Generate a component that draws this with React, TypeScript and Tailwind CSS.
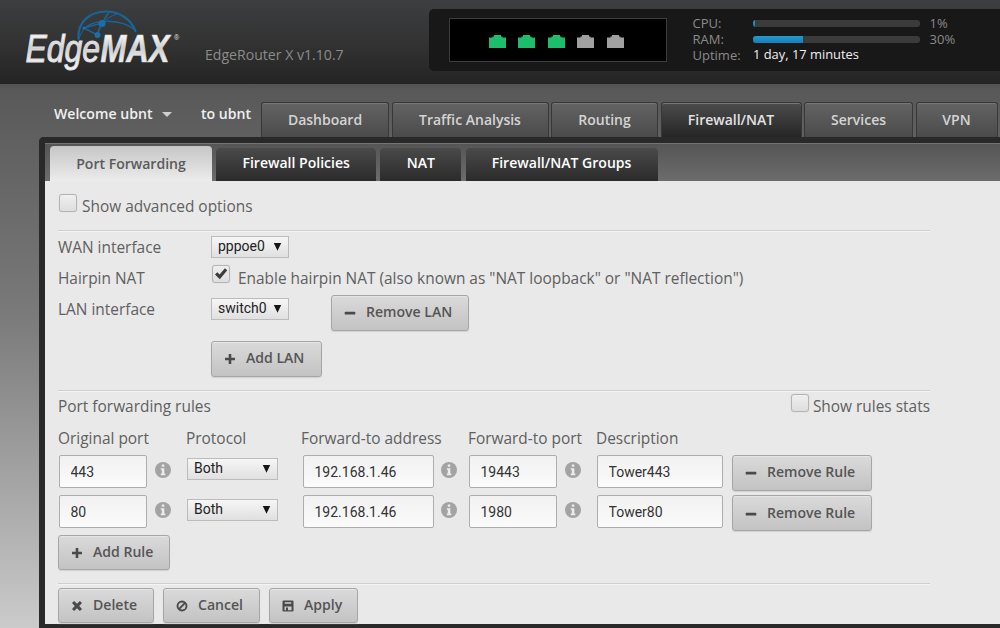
import { useState } from "react"
import type { ReactNode } from "react"

type Rule = {
  id: number
  originalPort: string
  protocol: string
  address: string
  port: string
  description: string
}

const RULES: Rule[] = [
  { id: 1, originalPort: "443", protocol: "Both", address: "192.168.1.46", port: "19443", description: "Tower443" },
  { id: 2, originalPort: "80", protocol: "Both", address: "192.168.1.46", port: "1980", description: "Tower80" },
]

const NAV = [
  { label: "Dashboard", width: "w-[128px]" },
  { label: "Traffic Analysis", width: "w-[157px]" },
  { label: "Routing", width: "w-[107px]" },
  { label: "Firewall/NAT", width: "w-[141px]" },
  { label: "Services", width: "w-[109px]" },
  { label: "VPN", width: "w-[82px]" },
  { label: "", width: "w-[60px]" },
]

const SUBTABS = [
  { label: "Port Forwarding", width: "w-[162px]" },
  { label: "Firewall Policies", width: "w-[160px]" },
  { label: "NAT", width: "w-[81px]" },
  { label: "Firewall/NAT Groups", width: "w-[192px]" },
]

const PORTS = [true, true, true, false, false]

function Logo() {
  return (
    <svg className="block" width="165" height="70" viewBox="20 5 165 70">
      <defs>
        <linearGradient id="steel" x1="0" y1="0" x2="0" y2="1">
          <stop offset="0.15" stopColor="#ffffff" />
          <stop offset="0.5" stopColor="#cfcfcf" />
          <stop offset="0.85" stopColor="#f2f2f2" />
        </linearGradient>
      </defs>
      <g fill="none" stroke="#17659a" strokeLinecap="round">
        <path d="M78.500 39C77 22 90 11.500 106 11.500C119 11.500 131 19 135.500 31" strokeWidth="2.200" />
        <path d="M86 27C97 19 120 19 134 29" strokeWidth="1.300" />
        <path d="M102 23L84 28L97 35L102 23L109 12" strokeWidth="1.500" />
        <path d="M97 35C99 26 104 18 117 14M84 28C82 32 80 35 79 39" strokeWidth="1" />
      </g>
      <g fill="#1a6fa8">
        <circle cx="102" cy="23.500" r="3.600" />
        <circle cx="97.500" cy="35" r="3" />
        <circle cx="84" cy="28" r="1.600" />
      </g>
      <g fill="url(#steel)" fontFamily="'Liberation Sans', sans-serif" fontStyle="italic">
        <text x="25.500" y="62" fontSize="39.500" textLength="74.500" lengthAdjust="spacingAndGlyphs" stroke="#dddddd" strokeWidth="1">Edge</text>
        <text x="100.500" y="62" fontSize="39.500" fontWeight="700" textLength="69" lengthAdjust="spacingAndGlyphs" stroke="#dddddd" strokeWidth="0.700">MAX</text>
        <text x="174" y="39.500" fontSize="7" fontStyle="normal">®</text>
      </g>
    </svg>
  )
}

function EthPort({ up }: { up: boolean }) {
  return (
    <svg className="block" width="17" height="13" viewBox="0 0 17 13">
      <path d="M0 13V2.500H3.500V1.500H5V0H12V1.500H13.500V2.500H17V13Z" fill={up ? "#1dbd6c" : "#a0a0a0"} />
    </svg>
  )
}

function Meter({ label, value }: { label: string; value: number }) {
  return (
    <div className="flex h-[15.700px] items-center leading-none">
      <span className="w-[60px]">{label}</span>
      <span className="block h-[7px] w-[167px] overflow-hidden rounded-[3px] bg-[#3b3b3b]">
        <span className="block h-full min-w-[2px] bg-linear-to-b from-[#2798d2] to-[#1580b8]" style={{ width: `${value}%` }} />
      </span>
      <span className="ml-[10px]">{value}%</span>
    </div>
  )
}

function Icon({ name }: { name: string }) {
  return (
    <svg className="block shrink-0" width="12" height="12" viewBox="0 0 12 12" fill="#4a4a4a">
      {name === "plus" && <path d="M4.700 1H7.300V4.700H11V7.300H7.300V11H4.700V7.300H1V4.700H4.700Z" />}
      {name === "minus" && <rect x="0.700" y="4.800" width="10.600" height="2.800" rx="0.600" />}
      {name === "remove" && <path d="M1 3.100L3.100 1L6 3.700L8.900 1L11 3.100L8.200 6L11 8.900L8.900 11L6 8.300L3.100 11L1 8.900L3.800 6Z" />}
      {name === "ban" && (
        <g fill="none" stroke="#4a4a4a" strokeWidth="1.900">
          <circle cx="6" cy="6" r="4.500" />
          <path d="M2.900 9.100L9.100 2.900" />
        </g>
      )}
      {name === "save" && (
        <path
          fillRule="evenodd"
          d="M1.500 0.500H10.500Q11.500 0.500 11.500 1.500V10.500Q11.500 11.500 10.500 11.500H1.500Q0.500 11.500 0.500 10.500V1.500Q0.500 0.500 1.500 0.500ZM2.800 2.200V3.800H9.200V2.200ZM2.500 6.500V10.200H9.500V6.500ZM4 7.500H6V10.200H4Z"
        />
      )}
    </svg>
  )
}

function Button({ icon, className, children }: { icon: string; className: string; children: ReactNode }) {
  return (
    <button
      className={`flex h-[35.500px] shrink-0 items-center rounded-[3px] border border-[#a6a6a6] bg-linear-to-b from-[#dadada] to-[#c3c3c3] pb-[2px] pl-[12px] text-[14.050px] font-semibold text-[#555] shadow-[inset_0_1px_0_#e6e6e6,0_1px_1px_#d0d0d0] ${className}`}
    >
      <span className="mt-[3px] mr-[10px]"><Icon name={icon} /></span>
      <span className="whitespace-nowrap">{children}</span>
    </button>
  )
}

function Checkbox({ checked, onToggle }: { checked: boolean; onToggle: () => void }) {
  return (
    <button
      role="checkbox"
      aria-checked={checked}
      onClick={onToggle}
      className="flex size-[18px] shrink-0 items-center justify-center rounded-[3px] border-[1.500px] border-[#b4b4b4] bg-linear-to-b from-[#efefef] to-[#dedede] shadow-[0_0_1px_#b4b4b4]"
    >
      {checked && (
        <svg className="block" width="14" height="14" viewBox="0 0 14 14">
          <path d="M1 7.600L3.300 5.300L5.600 7.600L10.900 1.200L13.300 3.200L5.800 12.300Z" fill="#3c3c3c" />
        </svg>
      )}
    </button>
  )
}

function Select({ value, className }: { value: string; className: string }) {
  return (
    <div
      className={`flex h-[22px] shrink-0 items-center justify-between border border-[#bcbcbc] bg-linear-to-b from-[#f6f6f6] to-[#e0e0e0] pr-[6px] pl-[6px] font-['Roboto',sans-serif] text-[14px] text-[#222] ${className}`}
    >
      <span className="-mt-px">{value}</span>
      <svg className="-mt-px block" width="9" height="9" viewBox="0 0 9 9"><path d="M0.800 1H8.200L4.500 8.700Z" fill="#151515" /></svg>
    </div>
  )
}

function Field({ value, className }: { value: string; className: string }) {
  return (
    <input
      defaultValue={value}
      className={`h-[33px] shrink-0 rounded-[2px] border border-[#adadad] bg-linear-to-b from-[#f1f1f1] to-[#fbfbfb] pl-[10.500px] font-['Roboto',sans-serif] text-[14px] text-[#333] outline-none ${className}`}
    />
  )
}

function Info({ className }: { className: string }) {
  return (
    <svg className={`mt-[7px] block shrink-0 ${className}`} width="16" height="16" viewBox="0 0 16 16">
      <circle cx="8" cy="8" r="8" fill="#a3a3a3" />
      <path d="M6.800 2.500H9.300V4.800H6.800ZM5.800 6.200H9.300V11.500H10.300V13.200H5.800V11.500H6.800V7.800H5.800Z" fill="#ececec" />
    </svg>
  )
}

function Divider() {
  return <div className="h-[2px] w-[872px] border-t border-b border-t-[#cfcfcf] border-b-[#f4f4f4]" />
}

export default function App() {
  const [advanced, setAdvanced] = useState(false)
  const [hairpin, setHairpin] = useState(true)
  const [stats, setStats] = useState(false)

  return (
    <div className="flex h-[628px] w-[1000px] flex-col overflow-hidden bg-linear-to-b from-[#4c4c4c] via-[#7a7a7a] to-[#cbcbcb] font-['Open_Sans','Noto_Sans',sans-serif] text-[15.430px] text-[#606060]">
      {/* Header */}
      <header className="flex h-[88px] shrink-0 border-b-4 border-[#555354] bg-linear-to-b from-[#3c3e40] via-[#333] to-[#242424]">
        <div className="w-[185px] shrink-0 pt-[5px] pl-[20px]"><Logo /></div>
        <div className="w-[224px] shrink-0 pt-[45px] pl-[20px] text-[14.100px] leading-5 whitespace-nowrap text-[#8b8b8b]">EdgeRouter X v1.10.7</div>
        <div className="mt-[9px] ml-[20px] flex h-[62px] flex-1 rounded-l-[5px] bg-[#181818] pt-[9px] pl-[20px]">
          <div className="flex h-[44px] w-[218px] shrink-0 justify-center gap-[12.500px] border border-[#3c3c3c] bg-black pt-[16px] pr-[4px]">
            {PORTS.map((up, i) => <EthPort key={i} up={up} />)}
          </div>
          <div className="-mt-[2px] ml-[25.500px] text-[13px] text-[#8a8a8a]">
            <Meter label="CPU:" value={1} />
            <Meter label="RAM:" value={30} />
            <div className="flex h-[15.500px] items-center leading-none">
              <span className="w-[60.500px]">Uptime:</span>
              <span className="-mt-px text-[12.900px] whitespace-nowrap text-[#f0f0f0]">1 day, 17 minutes</span>
            </div>
          </div>
        </div>
      </header>

      {/* Main navigation */}
      <nav className="flex h-[49px] shrink-0 text-[14px] font-semibold whitespace-nowrap text-[#f0f0f0]">
        <div className="flex w-[147px] shrink-0 pt-[16px] pl-[54px] text-[14.100px] leading-5">
          Welcome ubnt
          <svg className="mt-[8px] ml-[10px] block shrink-0" width="10" height="5" viewBox="0 0 10 5"><path d="M0 0H10L5 5Z" fill="#cfcfcf" /></svg>
        </div>
        <div className="w-[114px] shrink-0 pt-[16px] pl-[54px] text-[14.100px] leading-5">to ubnt</div>
        <div className="mt-[13.500px] flex gap-[2.500px]">
          {NAV.map((tab) => (
            <div
              key={tab.label}
              className={`flex h-[35.500px] shrink-0 items-center justify-center rounded-t-[3px] border border-b-0 border-[#383838] pb-px shadow-[inset_0_1px_0_#777] ${tab.width} ${
                tab.label === "Firewall/NAT"
                  ? "bg-linear-to-b from-[#4c4c4c] to-[#262626] text-[#e2e2e2]"
                  : "bg-linear-to-b from-[#636363] to-[#4b4b4b] text-[#d4d4d4]"
              }`}
            >
              {tab.label}
            </div>
          ))}
        </div>
      </nav>

      {/* Panel */}
      <main className="ml-[39px] flex flex-1 flex-col rounded-tl-[5px] border-t-6 border-b-4 border-l-6 border-[#292929] bg-[#e9e9e9]">
        <div className="flex h-[38px] shrink-0 items-end gap-[4.200px] bg-linear-to-b from-[#555] to-[#6c6c6c] pl-[5px] text-[14.050px] font-semibold text-white shadow-[inset_0_1px_0_#737373]">
          {SUBTABS.map((tab, i) => (
            <div
              key={tab.label}
              className={`flex shrink-0 items-center justify-center rounded-t-[4px] ${tab.width} ${
                i === 0
                  ? "h-[35px] bg-linear-to-b from-[#c6c6c6] to-[#ececec] text-[#5a5a5a]"
                  : "h-[33px] bg-linear-to-b from-[#4a4a4a] to-[#2b2b2b] pb-[3px]"
              }`}
            >
              {tab.label}
            </div>
          ))}
        </div>

        <div className="pl-[13px]">
          <div className="flex h-[49px] pt-[13px] pl-px">
            <Checkbox checked={advanced} onToggle={() => setAdvanced(!advanced)} />
            <span className="mt-[2px] ml-[5px] leading-[22px]">Show advanced options</span>
          </div>
          <Divider />

          <div className="flex h-[31px] pt-[4px]">
            <span className="w-[153px] pt-px leading-[22px]">WAN interface</span>
            <Select value="pppoe0" className="w-[78px]" />
          </div>
          <div className="flex h-[31px] pt-[2px]">
            <span className="w-[154px] pt-[3px] leading-[22px]">Hairpin NAT</span>
            <Checkbox checked={hairpin} onToggle={() => setHairpin(!hairpin)} />
            <span className="ml-[8px] pt-[3px] leading-[22px]">Enable hairpin NAT (also known as "NAT loopback" or "NAT reflection")</span>
          </div>
          <div className="flex h-[47px] pt-px">
            <span className="w-[153px] pt-[4px] leading-[22px]">LAN interface</span>
            <Select value="switch0" className="mt-[3px] w-[78px]" />
            <Button icon="minus" className="ml-[42px] w-[138px]">Remove LAN</Button>
          </div>
          <div className="h-[49px] pl-[153px]">
            <Button icon="plus" className="w-[111px]">Add LAN</Button>
          </div>
          <Divider />

          <div className="flex h-[32px] w-[872px] pt-[2px]">
            <span className="flex-1 pt-[2px] leading-[22px]">Port forwarding rules</span>
            <Checkbox checked={stats} onToggle={() => setStats(!stats)} />
            <span className="ml-[4px] pt-[2px] leading-[22px]">Show rules stats</span>
          </div>
          <div className="flex h-[31px] leading-[29px] whitespace-nowrap">
            <span className="w-[128px]">Original port</span>
            <span className="w-[115px]">Protocol</span>
            <span className="w-[167px]">Forward-to address</span>
            <span className="w-[128px]">Forward-to port</span>
            <span>Description</span>
          </div>
          {RULES.map((rule) => (
            <div key={rule.id} className="flex h-[40.300px] items-start pl-px">
              <Field value={rule.originalPort} className="w-[88px]" />
              <Info className="ml-[8px]" />
              <Select value={rule.protocol} className="mt-[3.300px] ml-[16px] w-[91px]" />
              <Field value={rule.address} className="ml-[25px] w-[131px]" />
              <Info className="ml-[7px]" />
              <Field value={rule.port} className="ml-[12px] w-[88px]" />
              <Info className="ml-[8px]" />
              <Field value={rule.description} className="ml-[16px] w-[126px]" />
              <Button icon="minus" className="ml-[9px] w-[140px]">Remove Rule</Button>
            </div>
          ))}
          <div className="-mt-px h-[48.400px]">
            <Button icon="plus" className="w-[112px]">Add Rule</Button>
          </div>
          <Divider />
          <div className="flex gap-[9px] pt-[3px]">
            <Button icon="remove" className="w-[96px]">Delete</Button>
            <Button icon="ban" className="w-[97px]">Cancel</Button>
            <Button icon="save" className="w-[89px]">Apply</Button>
          </div>
        </div>
      </main>
    </div>
  )
}
